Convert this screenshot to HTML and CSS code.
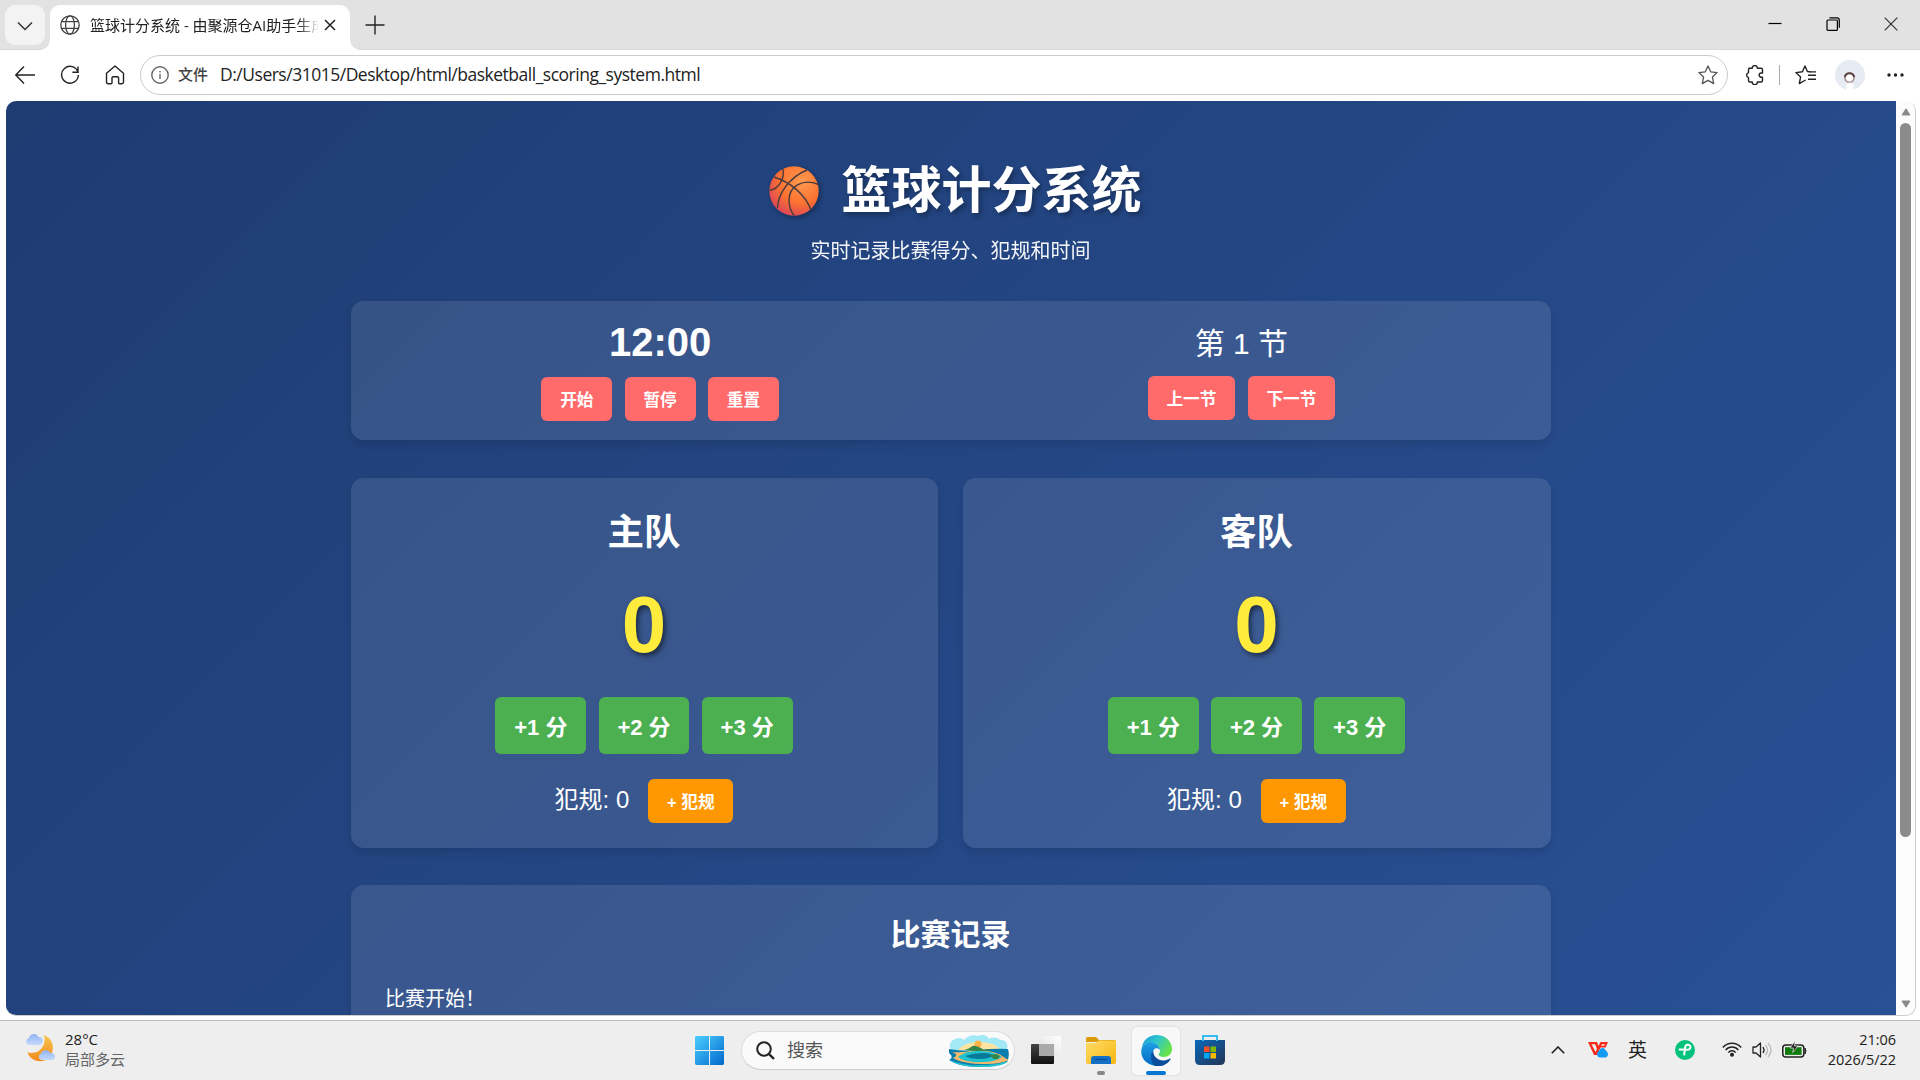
FILE: index.html
```html
<!DOCTYPE html>
<html lang="zh-CN">
<head>
    <meta charset="UTF-8">
    <meta name="viewport" content="width=device-width, initial-scale=1.0">
    <title>篮球计分系统</title>
    <link rel="stylesheet" href="styles.css">
</head>
<body>
    <!-- Tab strip -->
    <div class="tab-bar">
        <div class="tab-menu">
            <svg width="16" height="10" viewBox="0 0 16 10"><path d="M1 1.5l7 7 7-7" fill="none" stroke="#333" stroke-width="1.5"/></svg>
        </div>
        <div class="tab">
            <svg width="20" height="20" viewBox="0 0 20 20" fill="none" stroke="#444" stroke-width="1.3"><circle cx="10" cy="10" r="9.2"/><ellipse cx="10" cy="10" rx="4.4" ry="9.2"/><path d="M1.6 6.6h16.8M1.6 13.4h16.8"/></svg>
            <span class="tab-title">篮球计分系统 - 由聚源仓AI助手生成</span>
            <svg width="12" height="12" viewBox="0 0 12 12"><path d="M1 1l10 10M11 1L1 11" stroke="#222" stroke-width="1.5"/></svg>
        </div>
        <svg class="new-tab" width="20" height="20" viewBox="0 0 20 20"><path d="M10 .5v19M.5 10h19" stroke="#222" stroke-width="1.4"/></svg>
        <div class="window-controls">
            <svg width="14" height="14" viewBox="0 0 14 14"><path d="M.5 6.5h13" stroke="#000" stroke-width="1.2"/></svg>
            <svg width="14" height="14" viewBox="0 0 14 14" fill="none" stroke="#000" stroke-width="1.2"><rect x="1" y="3" width="10.4" height="10.4" rx="1"/><path d="M3.5.9h7.5q2.3 0 2.3 2.3v7.5"/></svg>
            <svg width="14" height="14" viewBox="0 0 14 14"><path d="M.7.7l12.6 12.6M13.3.7L.7 13.3" stroke="#333" stroke-width="1.2"/></svg>
        </div>
    </div>

    <!-- Address bar -->
    <div class="toolbar">
        <svg width="20" height="20" viewBox="0 0 20 20" fill="none" stroke="#222" stroke-width="1.4"><path d="M20 10H1M9 1.5L.8 10 9 18.5"/></svg>
        <svg width="20" height="20" viewBox="0 0 20 20" fill="none" stroke="#222" stroke-width="1.4"><path d="M18 7.2A8.4 8.4 0 1 0 18.4 10M18 1.5v5.7h-5.6"/></svg>
        <svg width="20" height="20" viewBox="0 0 20 20" fill="none" stroke="#222" stroke-width="1.4" stroke-linejoin="round"><path d="M1.500 8.200L10 1l8.500 7.200V17q0 1.700-1.700 1.700h-2.200q-1 0-1-1V13q0-1.300-1.300-1.300H8.200Q7 11.700 7 13v4.700q0 1-1 1H3.200q-1.700 0-1.700-1.700z"/></svg>
        <div class="address">
            <svg width="18" height="18" viewBox="0 0 18 18" fill="none" stroke="#666" stroke-width="1.4"><circle cx="9" cy="9" r="8.2"/><path d="M9 8v5M9 5v1.600"/></svg>
            <span class="scheme">文件</span>
            <span class="url">D:/Users/31015/Desktop/html/basketball_scoring_system.html</span>
            <svg class="star" width="20" height="20" viewBox="0 0 20 20" fill="none" stroke="#555" stroke-width="1.3" stroke-linejoin="round"><path d="M10 1l2.700 5.800 6.400.8-4.700 4.300 1.300 6.700L10 15.400 4.300 18.600l1.300-6.700L.9 7.600l6.400-.8z"/></svg>
        </div>
        <div class="tools">
            <svg width="20" height="20" viewBox="0 0 20 20" fill="none" stroke="#222" stroke-width="1.400" stroke-linejoin="round"><path d="M4 3.200h3.200a2.600 2.600 0 0 1 5.200 0H16q1.500 0 1.500 1.500V8h-1.200a2.100 2.100 0 0 0 0 4.200h1.200v3.300q0 1.500-1.500 1.500h-3.600a2.600 2.600 0 0 1-5.200 0H5q-1.500 0-1.500-1.500v-2.900a2.600 2.600 0 0 1 0-5V4.700q0-1.500 1.500-1.500z"/></svg>
            <span class="divider"></span>
            <svg class="favorites" width="21" height="20" viewBox="0 0 21 20" fill="none" stroke="#222" stroke-width="1.400" stroke-linejoin="round"><path d="M16 7l-3.600-.5L10 1 7.400 6.800.9 7.600l4.700 4.300-1.300 6.700 6.300-3.600M13 10.300h8M13 14.300h8M13 6.900h8"/></svg>
            <svg class="avatar" width="30" height="30" viewBox="0 0 30 30"><circle cx="15" cy="15" r="15" fill="#e6eaf3"/><circle cx="14.500" cy="17.800" r="4.500" fill="#fff" stroke="#a58d8d" stroke-width="1.600"/><path d="M9.800 17a4.800 4.800 0 0 1 9.400 0" fill="none" stroke="#5d4042" stroke-width="2"/><path d="M11.500 30v-6q3-3 7 0v6z" fill="#fff"/></svg>
            <svg class="more" width="17" height="4" viewBox="0 0 17 4" fill="#222"><circle cx="2" cy="2" r="1.700"/><circle cx="8.500" cy="2" r="1.700"/><circle cx="15" cy="2" r="1.700"/></svg>
        </div>
    </div>

    <div class="viewport">
        <div class="page">
            <div class="container">
                <header>
                    <h1>
                        <svg class="ball" width="50" height="50" viewBox="0 0 50 50">
                            <defs><radialGradient id="ballFill" cx=".65" cy=".3" r=".8"><stop offset="0" stop-color="#ff9a50"/><stop offset=".55" stop-color="#fb7330"/><stop offset="1" stop-color="#d83f5d"/></radialGradient></defs>
                            <circle cx="25" cy="25" r="24.700" fill="url(#ballFill)"/>
                            <path d="M14 3c1.500 10-4 20-13.500 21.500M5 11c16 5 31 17 37 33M38 4C21 11 9 27 8.500 42M49.500 18.500C34 12 20 20 20 34c0 6 1.500 11 5 15.500" fill="none" stroke="#493a40" stroke-width="1.400"/>
                        </svg>
                        <span>篮球计分系统</span>
                    </h1>
                    <p>实时记录比赛得分、犯规和时间</p>
                </header>

                <!-- Clock and period -->
                <div class="game-info">
                    <div class="timer">
                        <div class="time">12:00</div>
                        <div class="controls">
                            <button>开始</button>
                            <button>暂停</button>
                            <button>重置</button>
                        </div>
                    </div>
                    <div class="period">
                        <div class="period-label">第 1 节</div>
                        <div class="controls">
                            <button>上一节</button>
                            <button>下一节</button>
                        </div>
                    </div>
                </div>

                <!-- Teams -->
                <div class="scoreboard">
                    <div class="team">
                        <h2>主队</h2>
                        <div class="score">0</div>
                        <div class="score-buttons">
                            <button>+1 分</button>
                            <button>+2 分</button>
                            <button>+3 分</button>
                        </div>
                        <div class="fouls">
                            <span>犯规: 0</span>
                            <button class="foul-btn">+ 犯规</button>
                        </div>
                    </div>
                    <div class="team">
                        <h2>客队</h2>
                        <div class="score">0</div>
                        <div class="score-buttons">
                            <button>+1 分</button>
                            <button>+2 分</button>
                            <button>+3 分</button>
                        </div>
                        <div class="fouls">
                            <span>犯规: 0</span>
                            <button class="foul-btn">+ 犯规</button>
                        </div>
                    </div>
                </div>

                <div class="game-log">
                    <h3>比赛记录</h3>
                    <div class="log-entry">比赛开始！</div>
                </div>
            </div>
        </div>
        <div class="scrollbar">
            <svg width="10" height="8" viewBox="0 0 10 8"><path d="M5 .8L9 7H1z" fill="#8b8b8b" stroke="#8b8b8b" stroke-linejoin="round"/></svg>
            <div class="thumb"></div>
            <svg width="10" height="8" viewBox="0 0 10 8"><path d="M5 7.200L9 1H1z" fill="#8b8b8b" stroke="#8b8b8b" stroke-linejoin="round"/></svg>
        </div>
    </div>

    <!-- Taskbar -->
    <div class="taskbar">
        <div class="weather">
            <svg width="31" height="30" viewBox="0 0 31 30">
                <defs>
                    <linearGradient id="moon" x1="0" y1="0" x2="0" y2="1"><stop offset="0" stop-color="#f8c64e"/><stop offset="1" stop-color="#f28b1d"/></linearGradient>
                    <linearGradient id="cloud" x1="0" y1="0" x2="0" y2="1"><stop offset="0" stop-color="#90b4f2"/><stop offset="1" stop-color="#c5dafa"/></linearGradient>
                </defs>
                <path d="M19 2c7 3 10 9 8.500 16C26 25 20 29 13 28c-5-.5-9-4-10.500-8.500C13 22 22 14 19 2z" fill="url(#moon)"/>
                <path d="M4 12a3.600 3.600 0 0 1 0-7C5 0 12-.5 13.500 4c5-.5 6 7 1 8z" fill="url(#cloud)"/>
                <path d="M16 27a3.500 3.500 0 0 1 0-6.500c1-4 8-4.500 9.500-.5 6 0 6 7 1 7z" fill="url(#cloud)"/>
            </svg>
            <div class="weather-text">
                <div>28°C</div>
                <div class="muted">局部多云</div>
            </div>
        </div>

        <div class="apps">
            <svg class="start" width="29" height="29" viewBox="0 0 29 29">
                <defs><linearGradient id="win" x1="0" y1="0" x2="1" y2="1"><stop offset="0" stop-color="#4cd0ff"/><stop offset="1" stop-color="#0068cb"/></linearGradient></defs>
                <path d="M1 0h13v14H0V1zM15 0h13l1 1v13H15zM0 15h14v14H1l-1-1zM15 15h14v13l-1 1H15z" fill="url(#win)"/>
            </svg>
            <div class="search">
                <svg width="19" height="19" viewBox="0 0 19 19" fill="none" stroke="#222" stroke-width="2"><circle cx="8" cy="8" r="6.800"/><path d="M12.800 12.800l5.200 5.200" stroke-width="2.400"/></svg>
                <span>搜索</span>
                <svg class="island" width="60" height="32" viewBox="0 0 60 32">
                    <path d="M4 16c-5-3-4-10 2-12 3-2 7-1 9 1 5-6 11-5 14-4 5-2 9-1 11 3 5-3 9-1 11 1 8-1 10 8 4 13z" fill="#a2e8f5"/>
                    <path d="M9 15C14 9 22 7 30 7s17 2 22 8z" fill="#ffe3a0"/>
                    <circle cx="29" cy="9" r="3.500" fill="#ffb347"/>
                    <path d="M0 14q15 3 30 1t29-1q2 7-1 13-12 5-28 5-20 0-30-7 4-2 2-5-3-2-2-6z" fill="#087daf"/>
                    <path d="M3 17q12 1 22-2 22 0 31 8l4 2q-8 4-23 4-23 0-33-6 7-3-1-6z" fill="#f2b96a"/>
                    <path d="M9 22q8-7 22-6 13 0 22 6-7 5-19 5-18 1-25-5z" fill="#1fc3cf"/>
                    <path d="M16 21q9-3 18-3 8 0 10 3-5 3-13 3-10 0-15-3z" fill="#087899"/>
                    <path d="M15 15q5-1 7-3 2-2 5-1 4 1 8 4 6-2 8 0-14 2-28 0zM41 20q8-2 10 1l-2 3q-6 1-8-4z" fill="#368448"/>
                    <path d="M1 25q14 6 31 5 16 0 27-4-5 6-27 6-23 0-31-7z" fill="#21c1cf"/>
                </svg>
            </div>
            <svg class="taskview" width="30" height="29" viewBox="0 0 30 29">
                <defs>
                    <linearGradient id="dark" x1="0" y1="0" x2="0" y2="1"><stop offset="0" stop-color="#444"/><stop offset="1" stop-color="#111"/></linearGradient>
                    <linearGradient id="pale" x1="1" y1="0" x2="0" y2="1"><stop offset="0" stop-color="#fff"/><stop offset="1" stop-color="#ddd"/></linearGradient>
                </defs>
                <rect y="8" width="23" height="20" rx="1" fill="url(#dark)"/>
                <rect x="8" y="0" width="22" height="20" rx="1" fill="url(#pale)"/>
                <path d="M8 8h15v12H8z" fill="#aaa"/>
            </svg>
            <div class="app folder">
                <svg width="30" height="28" viewBox="0 0 30 28">
                    <defs><linearGradient id="folder" x1="0" y1="0" x2="1" y2="1"><stop offset="0" stop-color="#ffdc69"/><stop offset="1" stop-color="#f8b60e"/></linearGradient></defs>
                    <path d="M0 1.500Q0 0 1.500 0H10l3 3h15q2 0 2 2H0z" fill="#db9b09"/>
                    <path d="M0 6h10l3-2.500h17V25q0 2-2 2H2q-2 0-2-2z" fill="url(#folder)"/>
                    <path d="M5 27v-5q0-3 3-3h14q3 0 3 3v5z" fill="#1470c6"/>
                    <path d="M8.500 22.500h13" stroke="#064c94" stroke-width="1.200"/>
                </svg>
                <span class="dot"></span>
            </div>
            <div class="app edge">
                <svg width="31" height="31" viewBox="0 0 31 31">
                    <defs>
                        <linearGradient id="edgeTop" x1="0" y1="0" x2="1" y2=".5"><stop offset="0" stop-color="#1597dc"/><stop offset=".5" stop-color="#30c5cf"/><stop offset="1" stop-color="#66e34a"/></linearGradient>
                        <linearGradient id="edgeSide" x1="0" y1="0" x2="0" y2="1"><stop offset="0" stop-color="#1b9ee4"/><stop offset="1" stop-color="#0669c2"/></linearGradient>
                    </defs>
                    <path d="M.7 13C2 5 8 0 15.500 0 24 0 31 6 31 14c0 5-4 8-8 8-3.500 0-5.500-1.500-5.500-2.500 0-.8 1.500-1.500 1.500-4C19 12 15 8 9.500 8 5 8 2 10 .7 13z" fill="url(#edgeTop)"/>
                    <path d="M.5 14C2 9 6 7.500 10 7.700c5 .2 8.500 3.300 9 7.300-3-3-7-2-7 3 0 5 4 9 11 12-4 1.500-8 1.300-12 0C4 28-1 22 .5 14z" fill="url(#edgeSide)"/>
                    <path d="M12.300 16C9 19 9 26 14 31c7 1 13-2 15.500-6.500.4-.8-.3-1.300-1-.8-5 3-11 2-14-1.700-1.700-2-2.300-4-2.200-6z" fill="#0c4d9c"/>
                </svg>
                <span class="dot active"></span>
            </div>
            <svg class="store" width="30" height="30" viewBox="0 0 30 30">
                <defs><linearGradient id="store" x1="0" y1="0" x2="1" y2="1"><stop offset="0" stop-color="#0868b8"/><stop offset="1" stop-color="#233457"/></linearGradient></defs>
                <path d="M0 5h30v20q0 5-5 5H5q-5 0-5-5z" fill="url(#store)"/>
                <path d="M8 6V1h14v5" fill="none" stroke="#36bdf3" stroke-width="2"/>
                <path d="M9 11.500h5.500V17H9z" fill="#f25022"/><path d="M15.500 11.500H21V17h-5.500z" fill="#7fba00"/>
                <path d="M9 18h5.500v5.500H9z" fill="#00a4ef"/><path d="M15.500 18H21v5.500h-5.500z" fill="#ffb900"/>
            </svg>
        </div>

        <div class="tray">
            <svg width="14" height="8" viewBox="0 0 14 8"><path d="M.8 7.200L7 1l6.200 6.200" fill="none" stroke="#222" stroke-width="1.600"/></svg>
            <svg class="v-icon" width="20" height="16" viewBox="0 0 20 16">
                <path d="M0 0h9l1.500 4L12.500 0H20l-2.500 5.500h-5L9 13H6z" fill="#fa2b1d"/>
                <path d="M3.500 2.200h3.700L9 7l-1.500 3zM14 2.200h3l-.8 1.500h-3z" fill="#eee"/>
                <path d="M11.500 15.500a3.500 3.500 0 0 1-.5-6.500c1-4 6-4 7 0 3 1.500 2.500 6.500-1 6.500z" fill="#169bf4"/>
            </svg>
            <span class="ime">英</span>
            <svg class="plus" width="20" height="20" viewBox="0 0 20 20"><circle cx="10" cy="10" r="10" fill="#04c27b"/><path d="M9.200 14.500L10.200 7q.5-2.500 3-2.200 2.700.5 2.200 2.800-.5 2.200-3 2.200L4.500 9.500" fill="none" stroke="#fff" stroke-width="2" stroke-linecap="round"/></svg>
            <svg class="wifi" width="20" height="15" viewBox="0 0 20 15" fill="none" stroke="#222" stroke-width="1.400"><path d="M.8 5.500c5-5.700 13.400-5.700 18.400 0M3.600 8c3.500-4 9.300-4 12.800 0M6.300 10.600c2-2.400 5.400-2.400 7.400 0"/><circle cx="10" cy="12.800" r="1.300" fill="#222"/></svg>
            <svg class="speaker" width="20" height="16" viewBox="0 0 20 16" fill="none" stroke="#222" stroke-width="1.300" stroke-linejoin="round"><path d="M1 5h3l4.500-4v14L4 11H1zM11 5q2 3 0 6"/><path d="M13.500 3q4 5 0 10M16 .8q6 7.200 0 14.400" stroke="#bbb"/></svg>
            <svg class="battery" width="25" height="17" viewBox="0 0 25 17"><rect x=".8" y="4" width="21" height="12" rx="3" fill="none" stroke="#222" stroke-width="1.500"/><rect x="3" y="6.200" width="16.600" height="7.700" fill="#107c10"/><path d="M23 7q2 3 0 6z" fill="#222" stroke="#222"/><path d="M13 0L8 7h3.500l-.8 4.500L16 5h-3.500z" fill="#222" stroke="#ededed" stroke-width=".7"/></svg>
            <div class="clock">
                <div>21:06</div>
                <div>2026/5/22</div>
            </div>
        </div>
    </div>
</body>
</html>
```
FILE: styles.css
```css
* {
    box-sizing: border-box;
    margin: 0;
    padding: 0;
}
body {
    width: 1920px;
    height: 1080px;
    overflow: hidden;
    background: #fff;
    font-family: "Liberation Sans", "Noto Sans CJK SC", sans-serif;
    color: #222;
}
svg {
    display: block;
    flex-shrink: 0;
}

/* Tab strip */
.tab-bar {
    display: flex;
    align-items: flex-start;
    height: 50px;
    background: #e2e2e2;
    border-bottom: 1px solid #d8d8d8;
}
.tab-menu {
    display: flex;
    align-items: center;
    justify-content: center;
    width: 40px;
    height: 40px;
    margin: 5px 5px 0;
    padding-top: 2px;
    background: #f3f3f3;
    border-radius: 10px;
}
.tab {
    display: flex;
    position: relative;
    align-items: center;
    width: 300px;
    height: 45px;
    margin-top: 5px;
    padding: 0 14px 5px 10px;
    background: #fff;
    border-radius: 10px 10px 0 0;
}
/* flared bottom corners of the active tab */
.tab::before, .tab::after {
    content: "";
    position: absolute;
    bottom: 0;
    width: 10px;
    height: 10px;
}
.tab::before {
    left: -10px;
    background: radial-gradient(circle at 0 0, transparent 9.5px, #fff 10px);
}
.tab::after {
    right: -10px;
    background: radial-gradient(circle at 100% 0, transparent 9.5px, #fff 10px);
}
.tab-title {
    flex: 1;
    margin: 0 5px 0 10px;
    overflow: hidden;
    white-space: nowrap;
    font: 15px/22px "Open Sans", "Noto Sans CJK SC", sans-serif;
    -webkit-mask-image: linear-gradient(to right, #000 91%, transparent);
    mask-image: linear-gradient(to right, #000 91%, transparent);
}
.new-tab {
    margin: 15px 0 0 15px;
}
.window-controls {
    display: flex;
    gap: 44px;
    margin: 17px 22px 0 auto;
}

/* Address bar */
.toolbar {
    display: flex;
    align-items: center;
    gap: 25px;
    height: 51px;
    padding: 0 16px 1px 15px;
}
.address {
    display: flex;
    align-items: center;
    width: 1588px;
    height: 40px;
    margin-left: -10px;
    padding: 0 9px 0 10px;
    border: 1px solid #ccc;
    border-radius: 20px;
}
.scheme {
    margin: -2px 12px 0 9px;
    font: 500 15px/20px "Noto Sans CJK SC", sans-serif;
    color: #444;
}
.url {
    margin-top: -2px;
    font: 17.5px/24px "Open Sans", sans-serif;
    letter-spacing: -0.49px;
}
.star {
    margin-left: auto;
}
.tools {
    display: flex;
    flex: 1;
    align-items: center;
    margin-left: -8px;
}
.divider {
    width: 1px;
    height: 20px;
    margin-left: 14px;
    background: #aaa;
}
.favorites {
    margin-left: 15px;
}
.avatar {
    margin-left: 19px;
}
.more {
    margin-left: 22px;
}

/* Browser viewport */
.viewport {
    display: flex;
    width: 1910px;
    height: 915px;
    margin-left: 6px;
    overflow: hidden;
    border-bottom: 1px solid #ccc;
    border-right: 1px solid #ccc;
    border-radius: 10px;
}
.page {
    width: 1890px;
    height: 1128px;
    background: linear-gradient(135deg, #1e3c72, #2a5298);
    color: #fff;
}
.scrollbar {
    display: flex;
    flex: 1;
    flex-direction: column;
    align-items: center;
    height: 914px;
    padding: 7px 0;
    background: #fcfcfc;
}
.thumb {
    width: 11px;
    height: 714px;
    margin: 7px 0 auto;
    background: #8b8b8b;
    border-radius: 6px;
}

.container {
    width: 1200px;
    margin: 0 auto;
    padding-top: 50px;
}
header {
    height: 150px;
    text-align: center;
}
h1 {
    display: flex;
    align-items: center;
    justify-content: center;
    gap: 23px;
    height: 78px;
    padding: 2px 0 0 8px;
    font-size: 50px;
    line-height: 74px;
    text-shadow: 2.5px 2.5px 5px rgba(0, 0, 0, 0.3);
}
.ball {
    filter: drop-shadow(2.5px 2.5px 2.5px rgba(0, 0, 0, 0.3));
}
h1 span {
    padding-bottom: 1px;
}
header p {
    margin: 7px 1px 0 0;
    font-size: 20px;
    line-height: 30px;
    opacity: 0.95;
}
button {
    height: 44px;
    padding: 0 18.75px;
    border: none;
    border-radius: 6px;
    background: #ff6b6b;
    color: #fff;
    font-family: inherit;
    font-size: 16.67px;
    font-weight: bold;
    white-space: nowrap;
    cursor: pointer;
}

/* Panels */
.game-info, .team, .game-log {
    background: rgba(255, 255, 255, 0.1);
    border-radius: 12.5px;
    box-shadow: 0 5px 7.5px rgba(0, 0, 0, 0.1);
}
.game-info {
    display: grid;
    grid-template-columns: 1fr 1fr;
    height: 139px;
    padding: 0 19px 0 18.5px;
    text-align: center;
}
.time {
    height: 76px;
    padding-top: 18px;
    font-size: 40px;
    font-weight: bold;
    line-height: 46px;
}
.period-label {
    height: 75px;
    padding-top: 20px;
    font-size: 30px;
    line-height: 46px;
}
.controls, .score-buttons {
    display: flex;
    justify-content: center;
    gap: 12.5px;
}
.scoreboard {
    display: grid;
    grid-template-columns: 587px 588px;
    gap: 25px;
    margin-top: 38px;
}
.team {
    height: 370px;
    padding: 28px 1px 0 0;
    text-align: center;
}
h2 {
    font-size: 36.5px;
    line-height: 54px;
}
.score {
    height: 137px;
    font-size: 80px;
    font-weight: bold;
    line-height: 130px;
    color: #ffeb3b;
    text-shadow: 2.5px 2.5px 5px rgba(0, 0, 0, 0.5);
}
.score-buttons button {
    height: 57px;
    padding-bottom: 2px;
    background: #4caf50;
    font-size: 22px;
}
.fouls {
    display: flex;
    justify-content: center;
    gap: 19px;
    margin-top: 25px;
    font-size: 24px;
    line-height: 42px;
}
.fouls .foul-btn {
    background: #ff9800;
}
.game-log {
    height: 240px;
    margin-top: 37px;
    padding: 25px 35px 25px 34px;
}
h3 {
    font-size: 30px;
    line-height: 49px;
    text-align: center;
}
.log-entry {
    margin-top: 25px;
    font-size: 20px;
    line-height: 30px;
}

/* Taskbar */
.taskbar {
    display: flex;
    height: 60px;
    margin-top: 4px;
    background: #eee;
    border-top: 1px solid #bbb;
    font: 15px/20px "Open Sans", "Noto Sans CJK SC", sans-serif;
}
.weather {
    display: flex;
    width: 695px;
    padding: 8px 0 0 25px;
}
.weather svg {
    margin-top: 4px;
}
.weather-text {
    margin-left: 9px;
}
.muted {
    color: #666;
}
.apps {
    display: flex;
    align-items: center;
    height: 59px;
}
.search {
    display: flex;
    align-items: center;
    width: 274px;
    height: 39px;
    margin-left: 17px;
    padding: 0 5px 0 14px;
    background: #fafafa;
    border: 1px solid #ddd;
    border-bottom-color: #ccc;
    border-radius: 20px;
}
.search span {
    margin: -1px auto 0 12px;
    font-size: 18px;
    color: #555;
}
.taskview {
    margin-left: 16px;
}
.app {
    display: flex;
    flex-direction: column;
    align-items: center;
    justify-content: space-between;
    width: 48px;
    height: 48px;
}
.folder {
    margin-left: 16px;
    padding-top: 10px;
}
.edge {
    margin-left: 7px;
    padding-top: 8px;
    background: #f8f8f8;
    border-radius: 5px;
    box-shadow: 0 0 1px 1px #e2e2e2;
}
.dot {
    width: 8px;
    height: 4px;
    border-radius: 2px;
    background: #888;
}
.dot.active {
    width: 20px;
    background: #0078d4;
}
.store {
    margin: -2px 0 0 15px;
}
.tray {
    display: flex;
    align-items: center;
    height: 59px;
    margin-left: auto;
    padding: 0 24px 2px 0;
}
.v-icon {
    margin-left: 23px;
}
.ime {
    margin-left: 20px;
    font-size: 19px;
}
.plus {
    margin-left: 28px;
}
.wifi {
    margin-left: 27px;
}
.speaker {
    margin-left: 10px;
}
.battery {
    margin-left: 10px;
}
.clock {
    width: 89px;
    text-align: right;
    font-size: 14.5px;
    letter-spacing: -0.05px;
    white-space: nowrap;
}
```
